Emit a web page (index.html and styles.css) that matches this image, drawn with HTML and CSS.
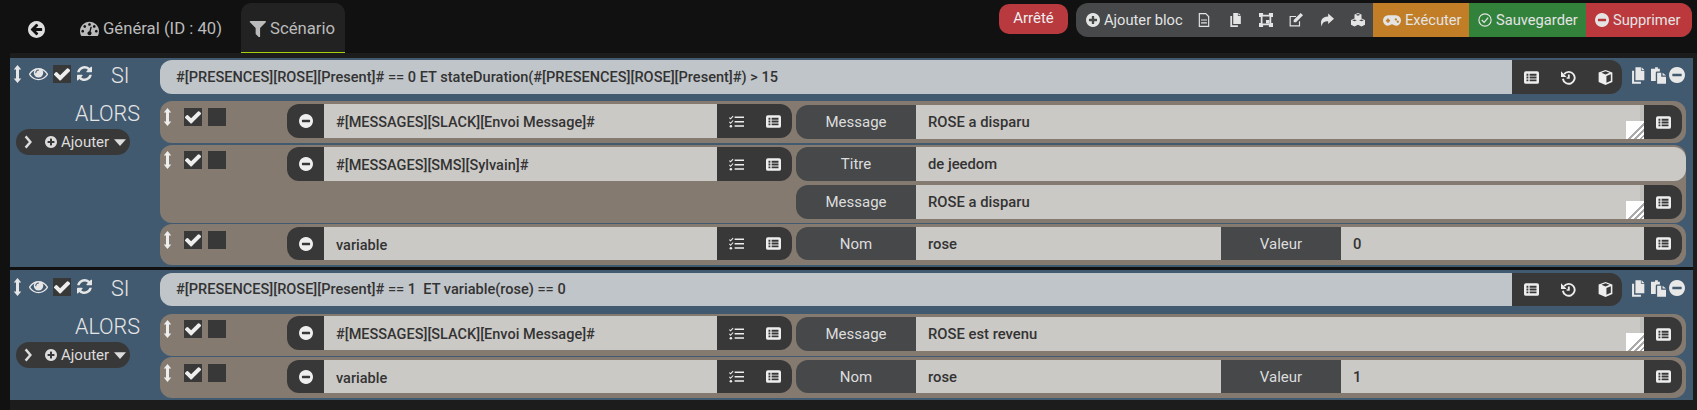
FILE: index.html
```html
<!DOCTYPE html>
<html lang="fr">
<head>
    <meta charset="UTF-8">
    <title>Scénario</title>
    <link rel="stylesheet" href="styles.css">
</head>
<body>
<svg class="defs" xmlns="http://www.w3.org/2000/svg">
    <symbol id="i-back" viewBox="128 128 1536 1536"><path d="M1408 960v-128q0-26-18.500-45t-45.500-19h-502l189-189q19-19 19-45t-19-45l-91-91q-18-18-45-18t-45 18l-362 362-91 91q-18 18-18 45t18 45l91 91 362 362q18 18 45 18t45-18l91-91q18-18 18-45t-18-45l-189-189h502q27 0 45.500-19t18.500-45zm256-64q0 209-103 385.500t-279.500 279.500-385.500 103-385.500-103-279.500-279.500-103-385.500 103-385.500 279.500-279.500 385.500-103 385.500 103 279.500 279.500 103 385.500z"/></symbol>
    <symbol id="i-gauge" viewBox="0 256 1792 1280"><path d="M384 1152q0-53-37.500-90.500t-90.500-37.500-90.500 37.500-37.500 90.500 37.500 90.500 90.500 37.500 90.500-37.500 37.500-90.500zm192-448q0-53-37.500-90.500t-90.500-37.500-90.500 37.500-37.500 90.500 37.500 90.500 90.500 37.500 90.500-37.500 37.500-90.500zm428 481l101-382q6-26-7.500-48.500t-38.500-29.500-48 6.500-30 39.500l-101 382q-60 5-107 43.500t-63 98.500q-20 77 20 146t117 89 146-20 89-117q16-60-6-117t-72-91zm660-33q0-53-37.500-90.500t-90.500-37.500-90.500 37.500-37.500 90.500 37.500 90.500 90.500 37.500 90.500-37.500 37.500-90.500zm-640-640q0-53-37.500-90.500t-90.500-37.500-90.500 37.500-37.500 90.500 37.500 90.500 90.500 37.500 90.500-37.500 37.500-90.500zm448 192q0-53-37.500-90.500t-90.500-37.500-90.500 37.500-37.500 90.500 37.500 90.500 90.500 37.500 90.500-37.500 37.500-90.500zm320 448q0 261-141 483-19 29-54 29h-1402q-35 0-54-29-141-221-141-483 0-182 71-348t191-286 286-191 348-71 348 71 286 191 191 286 71 348z"/></symbol>
    <symbol id="i-filter" viewBox="128 256 1472 1280"><path d="M1595 295q17 41-14 70l-493 493v742q0 42-39 59-13 5-25 5-27 0-45-19l-256-256q-19-19-19-45v-486l-493-493q-31-29-14-70 17-39 59-39h1280q42 0 59 39z"/></symbol>
    <symbol id="i-plus" viewBox="128 128 1536 1536"><path d="M1344 960v-128q0-26-19-45t-45-19h-256v-256q0-26-19-45t-45-19h-128q-26 0-45 19t-19 45v256h-256q-26 0-45 19t-19 45v128q0 26 19 45t45 19h256v256q0 26 19 45t45 19h128q26 0 45-19t19-45v-256h256q26 0 45-19t19-45zm320-64q0 209-103 385.500t-279.500 279.500-385.500 103-385.500-103-279.500-279.500-103-385.500 103-385.500 279.500-279.500 385.500-103 385.500 103 279.500 279.500 103 385.500z"/></symbol>
    <symbol id="i-minus" viewBox="128 128 1536 1536"><path d="M1344 960v-128q0-26-19-45t-45-19h-768q-26 0-45 19t-19 45v128q0 26 19 45t45 19h768q26 0 45-19t19-45zm320-64q0 209-103 385.500t-279.500 279.500-385.500 103-385.500-103-279.500-279.500-103-385.500 103-385.500 279.500-279.500 385.500-103 385.500 103 279.500 279.500 103 385.500z"/></symbol>
    <symbol id="i-check" viewBox="128 256 1536 1280"><path d="M1671 566q0 40-28 68l-724 724-136 136q-28 28-68 28t-68-28l-136-136-362-362q-28-28-28-68t28-68l136-136q28-28 68-28t68 28l294 295 656-657q28-28 68-28t68 28l136 136q28 28 28 68z"/></symbol>
    <symbol id="i-eye" viewBox="0 256 1792 1280"><path d="M1664 960q-152-236-381-353 61 104 61 225 0 185-131.500 316.500t-316.500 131.500-316.500-131.500-131.500-316.500q0-121 61-225-229 117-381 353 133 205 333.500 326.500t434.500 121.500 434.500-121.500 333.500-326.500zm-720-384q0-20-14-34t-34-14q-125 0-214.500 89.500t-89.500 214.500q0 20 14 34t34 14 34-14 14-34q0-86 61-147t147-61q20 0 34-14t14-34zm848 384q0 34-20 69-140 230-376.500 368.500t-499.500 138.500-499.500-139-376.500-368q-20-35-20-69t20-69q140-229 376.500-368t499.500-139 499.500 139 376.500 368q20 35 20 69z"/></symbol>
    <symbol id="i-refresh" viewBox="128 128 1536 1536"><path d="M1639 1056q0 5-1 7-64 268-268 434.500t-478 166.500q-146 0-282.500-55t-243.500-157l-129 129q-19 19-45 19t-45-19-19-45v-448q0-26 19-45t45-19h448q26 0 45 19t19 45-19 45l-137 137q71 66 161 102t187 36q134 0 250-65t186-179q11-17 53-117 8-23 30-23h192q13 0 22.500 9.500t9.500 22.500zm25-800v448q0 26-19 45t-45 19h-448q-26 0-45-19t-19-45 19-45l138-138q-148-137-349-137-134 0-250 65t-186 179q-11 17-53 117-8 23-30 23h-199q-13 0-22.500-9.500t-9.500-22.500v-7q65-268 270-434.500t480-166.500q146 0 284 55.500t245 156.500l130-129q19-19 45-19t45 19 19 45z"/></symbol>
    <symbol id="i-move" viewBox="0 0 10 24"><path d="M5 0l5 6H7v12h3l-5 6-5-6h3V6H0z"/></symbol>
    <symbol id="i-listalt" viewBox="0 0 24 20"><path fill-rule="evenodd" d="M3 0h18a3 3 0 0 1 3 3v14a3 3 0 0 1-3 3H3a3 3 0 0 1-3-3V3a3 3 0 0 1 3-3zM4 4v3h3V4zm5 0v3h11V4zM4 8.500v3h3v-3zm5 0v3h11v-3zM4 13v3h3v-3zm5 0v3h11v-3z"/></symbol>
    <symbol id="i-tasks" viewBox="0 0 24 20"><path d="M9 2h15v2.400H9zM9 9h15v2.400H9zM9 16h15v2.400H9zM1 3l1.500 1.500L6 .8l1.200 1.100-4.700 5L0 4.200zM1 10l1.500 1.500L6 7.800l1.200 1.100-4.700 5L0 11.200z"/><circle cx="3" cy="17.500" r="2"/></symbol>
    <symbol id="i-history" viewBox="0 0 24 24"><path fill="none" stroke="currentColor" stroke-width="3" d="M5 6.500A9.500 9.500 0 1 1 3 14"/><path d="M0 2l9 9H0z"/><path d="M11 7h3v7h-5v-2.600h2z"/></symbol>
    <symbol id="i-cube" viewBox="0 0 24 24"><path fill-rule="evenodd" d="M12 0l11 4v15l-11 5-11-5V4zM5.500 4.500L12 7l6.500-2.500L12 2zM13.500 9.500v11l7-3.200V6.800z"/></symbol>
    <symbol id="i-copy" viewBox="0 0 22 24"><path fill-rule="evenodd" d="M8 0h8v5h5v14H8zM17 0l4 4h-4zM6 5v16h10v3H3V5z"/></symbol>
    <symbol id="i-paste" viewBox="0 0 22 24"><path d="M3 2h3V0h4v2h3v4H9a2 2 0 0 0-2 2v12H0V2zM9 8h6v6h7v10H9zM17 8l5 4h-5z"/></symbol>
    <symbol id="i-file" viewBox="0 0 20 24"><path fill="none" stroke="currentColor" stroke-width="2" d="M2 1h11l5 5v17H2z"/><path d="M5 11h10v2H5zM5 16h10v2H5z"/></symbol>
    <symbol id="i-expand" viewBox="0 0 24 24"><path fill-rule="evenodd" d="M0 0h7v3h10V0h7v7h-3v10h3v7h-7v-3H7v3H0v-7h3V7H0zM6 6v12h12V6z"/><path d="M12 12h6v6h-6z"/></symbol>
    <symbol id="i-edit" viewBox="0 0 24 24"><path fill="none" stroke="currentColor" stroke-width="2" d="M18 14v8H2V6h10"/><path d="M20 0l4 4-12 12H8v-4z"/></symbol>
    <symbol id="i-share" viewBox="0 0 24 22"><path d="M14 0l10 9-10 9v-5C8 13 4 14 3 22 0 14 2 5 14 5z"/></symbol>
    <symbol id="i-cubes" viewBox="0 0 24 24"><path fill-rule="evenodd" d="M12 0l6 2.500v7L24 12v8l-6 3-6-3-6 3-6-3v-8l6-2.500v-7zM8 3l4 1.500L16 3l-4-1.500zM2 12.500L6 14l4-1.500L6 11zM14 12.500l4 1.500 4-1.500L18 11z"/></symbol>
    <symbol id="i-game" viewBox="0 0 28 16"><path fill-rule="evenodd" d="M8 0h12a8 8 0 0 1 0 16c-3 0-4-2-6-2s-3 2-6 2A8 8 0 0 1 8 0zM6.500 5v2h-2v2.500h2v2H9v-2h2V7H9V5zM20 4.500a1.800 1.800 0 1 0 .01 0zM23 8a1.800 1.800 0 1 0 .01 0z"/></symbol>
    <symbol id="i-okcircle" viewBox="0 0 24 24"><circle cx="12" cy="12" r="10.500" fill="none" stroke="currentColor" stroke-width="2"/><path fill="none" stroke="currentColor" stroke-width="2.200" d="M6.500 12l4 4 7-8"/></symbol>
    <symbol id="i-chevron" viewBox="0 0 10 16"><path fill="none" stroke="currentColor" stroke-width="3" d="M2 1l6 7-6 7"/></symbol>
    <symbol id="i-caret" viewBox="0 0 16 9"><path d="M0 0h16L8 9z"/></symbol>
</svg>

<header class="topbar">
    <nav class="tabs">
        <a class="tab-back"><svg class="ico ico-back"><use href="#i-back"/></svg></a>
        <a class="tab"><svg class="ico ico-gauge"><use href="#i-gauge"/></svg>Général (ID : 40)</a>
        <a class="tab tab-active"><svg class="ico ico-filter"><use href="#i-filter"/></svg>Scénario</a>
    </nav>
    <div class="state">Arrêté</div>
    <div class="toolbar">
        <a class="tool tool-add"><svg class="ico"><use href="#i-plus"/></svg>Ajouter bloc</a>
        <a class="tool-icon"><svg class="ico"><use href="#i-file"/></svg></a>
        <a class="tool-icon"><svg class="ico"><use href="#i-copy"/></svg></a>
        <a class="tool-icon"><svg class="ico"><use href="#i-expand"/></svg></a>
        <a class="tool-icon"><svg class="ico"><use href="#i-edit"/></svg></a>
        <a class="tool-icon"><svg class="ico"><use href="#i-share"/></svg></a>
        <a class="tool-icon"><svg class="ico"><use href="#i-cubes"/></svg></a>
        <a class="tool tool-run"><svg class="ico ico-game"><use href="#i-game"/></svg>Exécuter</a>
        <a class="tool tool-save"><svg class="ico"><use href="#i-okcircle"/></svg>Sauvegarder</a>
        <a class="tool tool-del"><svg class="ico"><use href="#i-minus"/></svg>Supprimer</a>
    </div>
</header>

<main class="blocks">
    <section class="block">
        <div class="block-if">
            <div class="block-tools">
                <svg class="ico ico-move"><use href="#i-move"/></svg>
                <svg class="ico ico-eye"><use href="#i-eye"/></svg>
                <span class="check"><svg class="ico"><use href="#i-check"/></svg></span>
                <svg class="ico ico-refresh"><use href="#i-refresh"/></svg>
                <span class="si">SI</span>
            </div>
            <div class="cond">#[PRESENCES][ROSE][Present]# == 0 ET stateDuration(#[PRESENCES][ROSE][Present]#) &gt; 15</div>
            <div class="btns cond-btns">
                <svg class="ico ico-btn"><use href="#i-listalt"/></svg>
                <svg class="ico ico-btn"><use href="#i-history"/></svg>
                <svg class="ico ico-btn"><use href="#i-cube"/></svg>
            </div>
            <div class="block-actions">
                <svg class="ico ico-copy"><use href="#i-copy"/></svg>
                <svg class="ico ico-copy"><use href="#i-paste"/></svg>
                <svg class="ico ico-rm"><use href="#i-minus"/></svg>
            </div>
        </div>
        <div class="block-then">
            <div class="then-left">
                <div class="alors">ALORS</div>
                <div class="add-pill">
                    <svg class="ico ico-chev"><use href="#i-chevron"/></svg>
                    <svg class="ico ico-plus"><use href="#i-plus"/></svg>Ajouter
                    <svg class="ico ico-caret"><use href="#i-caret"/></svg>
                </div>
            </div>
            <div class="rows">
                <div class="row row-area">
                    <div class="row-tools">
                        <svg class="ico ico-move"><use href="#i-move"/></svg>
                        <span class="check"><svg class="ico"><use href="#i-check"/></svg></span>
                        <span class="check"></span>
                    </div>
                    <div class="cmd">
                        <span class="cmd-rm"><svg class="ico"><use href="#i-minus"/></svg></span>
                        <div class="cmd-name">#[MESSAGES][SLACK][Envoi Message]#</div>
                        <div class="btns cmd-btns">
                            <svg class="ico ico-btn"><use href="#i-tasks"/></svg>
                            <svg class="ico ico-btn"><use href="#i-listalt"/></svg>
                        </div>
                    </div>
                    <div class="params">
                        <div class="param param-area">
                            <span class="param-label">Message</span>
                            <div class="param-value">ROSE a disparu<i class="resizer"></i></div>
                            <span class="param-btn"><svg class="ico ico-btn"><use href="#i-listalt"/></svg></span>
                        </div>
                    </div>
                </div>
                <div class="row row-multi">
                    <div class="row-tools">
                        <svg class="ico ico-move"><use href="#i-move"/></svg>
                        <span class="check"><svg class="ico"><use href="#i-check"/></svg></span>
                        <span class="check"></span>
                    </div>
                    <div class="cmd">
                        <span class="cmd-rm"><svg class="ico"><use href="#i-minus"/></svg></span>
                        <div class="cmd-name">#[MESSAGES][SMS][Sylvain]#</div>
                        <div class="btns cmd-btns">
                            <svg class="ico ico-btn"><use href="#i-tasks"/></svg>
                            <svg class="ico ico-btn"><use href="#i-listalt"/></svg>
                        </div>
                    </div>
                    <div class="params">
                        <div class="param param-title">
                            <span class="param-label">Titre</span>
                            <div class="param-value">de jeedom</div>
                        </div>
                        <div class="param param-area">
                            <span class="param-label">Message</span>
                            <div class="param-value">ROSE a disparu<i class="resizer"></i></div>
                            <span class="param-btn"><svg class="ico ico-btn"><use href="#i-listalt"/></svg></span>
                        </div>
                    </div>
                </div>
                <div class="row">
                    <div class="row-tools">
                        <svg class="ico ico-move"><use href="#i-move"/></svg>
                        <span class="check"><svg class="ico"><use href="#i-check"/></svg></span>
                        <span class="check"></span>
                    </div>
                    <div class="cmd">
                        <span class="cmd-rm"><svg class="ico"><use href="#i-minus"/></svg></span>
                        <div class="cmd-name">variable</div>
                        <div class="btns cmd-btns">
                            <svg class="ico ico-btn"><use href="#i-tasks"/></svg>
                            <svg class="ico ico-btn"><use href="#i-listalt"/></svg>
                        </div>
                    </div>
                    <div class="params">
                        <div class="param">
                            <span class="param-label">Nom</span>
                            <div class="param-value param-half">rose</div>
                            <span class="param-label param-mid">Valeur</span>
                            <div class="param-value">0</div>
                            <span class="param-btn"><svg class="ico ico-btn"><use href="#i-listalt"/></svg></span>
                        </div>
                    </div>
                </div>
            </div>
        </div>
    </section>

    <section class="block">
        <div class="block-if">
            <div class="block-tools">
                <svg class="ico ico-move"><use href="#i-move"/></svg>
                <svg class="ico ico-eye"><use href="#i-eye"/></svg>
                <span class="check"><svg class="ico"><use href="#i-check"/></svg></span>
                <svg class="ico ico-refresh"><use href="#i-refresh"/></svg>
                <span class="si">SI</span>
            </div>
            <div class="cond">#[PRESENCES][ROSE][Present]# == 1 &nbsp;ET variable(rose) == 0</div>
            <div class="btns cond-btns">
                <svg class="ico ico-btn"><use href="#i-listalt"/></svg>
                <svg class="ico ico-btn"><use href="#i-history"/></svg>
                <svg class="ico ico-btn"><use href="#i-cube"/></svg>
            </div>
            <div class="block-actions">
                <svg class="ico ico-copy"><use href="#i-copy"/></svg>
                <svg class="ico ico-copy"><use href="#i-paste"/></svg>
                <svg class="ico ico-rm"><use href="#i-minus"/></svg>
            </div>
        </div>
        <div class="block-then">
            <div class="then-left">
                <div class="alors">ALORS</div>
                <div class="add-pill">
                    <svg class="ico ico-chev"><use href="#i-chevron"/></svg>
                    <svg class="ico ico-plus"><use href="#i-plus"/></svg>Ajouter
                    <svg class="ico ico-caret"><use href="#i-caret"/></svg>
                </div>
            </div>
            <div class="rows">
                <div class="row row-area">
                    <div class="row-tools">
                        <svg class="ico ico-move"><use href="#i-move"/></svg>
                        <span class="check"><svg class="ico"><use href="#i-check"/></svg></span>
                        <span class="check"></span>
                    </div>
                    <div class="cmd">
                        <span class="cmd-rm"><svg class="ico"><use href="#i-minus"/></svg></span>
                        <div class="cmd-name">#[MESSAGES][SLACK][Envoi Message]#</div>
                        <div class="btns cmd-btns">
                            <svg class="ico ico-btn"><use href="#i-tasks"/></svg>
                            <svg class="ico ico-btn"><use href="#i-listalt"/></svg>
                        </div>
                    </div>
                    <div class="params">
                        <div class="param param-area">
                            <span class="param-label">Message</span>
                            <div class="param-value">ROSE est revenu<i class="resizer"></i></div>
                            <span class="param-btn"><svg class="ico ico-btn"><use href="#i-listalt"/></svg></span>
                        </div>
                    </div>
                </div>
                <div class="row">
                    <div class="row-tools">
                        <svg class="ico ico-move"><use href="#i-move"/></svg>
                        <span class="check"><svg class="ico"><use href="#i-check"/></svg></span>
                        <span class="check"></span>
                    </div>
                    <div class="cmd">
                        <span class="cmd-rm"><svg class="ico"><use href="#i-minus"/></svg></span>
                        <div class="cmd-name">variable</div>
                        <div class="btns cmd-btns">
                            <svg class="ico ico-btn"><use href="#i-tasks"/></svg>
                            <svg class="ico ico-btn"><use href="#i-listalt"/></svg>
                        </div>
                    </div>
                    <div class="params">
                        <div class="param">
                            <span class="param-label">Nom</span>
                            <div class="param-value param-half">rose</div>
                            <span class="param-label param-mid">Valeur</span>
                            <div class="param-value">1</div>
                            <span class="param-btn"><svg class="ico ico-btn"><use href="#i-listalt"/></svg></span>
                        </div>
                    </div>
                </div>
            </div>
        </div>
    </section>
</main>
</body>
</html>
```

FILE: styles.css
```css
html, body {
    height: 100%;
}
body {
    margin: 0;
    padding: 0;
    background-color: #111;
    color: #ddd;
    font-family: Roboto, sans-serif;
    font-size: 14px;
    overflow: hidden;
}
.defs {
    display: none;
}
.ico {
    width: 14px;
    height: 14px;
    fill: currentColor;
    flex: none;
    display: block;
}

/* top bar */
.topbar {
    height: 50px;
    padding-top: 3px;
    display: flex;
    align-items: flex-start;
    padding-left: 10px;
}
.tabs {
    display: flex;
    height: 50px;
    width: 989px;
    flex: none;
}
.tab-back {
    width: 70px;
    display: flex;
    align-items: center;
    padding: 2px 0 0 18px;
    box-sizing: border-box;
    color: #ddd;
}
.ico-back {
    width: 17px;
    height: 17px;
}
.tab {
    display: flex;
    align-items: center;
    height: 49px;
    padding-top: 2px;
    box-sizing: border-box;
    color: #bbb;
    font-size: 16.700px;
    gap: 4px;
}
.tab:nth-child(2) {
    width: 161px;
}
.tab-active {
    width: 104px;
    padding-left: 8px;
    background-color: #222;
    border-bottom: 1px solid #a4d20a;
    border-radius: 10px 10px 0 0;
    height: 50px;
}
.ico-gauge {
    width: 19px;
    height: 15px;
}
.ico-filter {
    width: 17px;
    height: 17px;
}
.state {
    width: 69px;
    height: 30px;
    margin-top: 1px;
    flex: none;
    border-radius: 10px;
    background-color: #b8393e;
    color: #eee;
    font-size: 15px;
    line-height: 28px;
    text-align: center;
}
.toolbar {
    display: flex;
    margin-left: 8px;
    height: 34px;
    width: 616px;
    flex: none;
    background-color: #46484a;
    border-radius: 12px;
    overflow: hidden;
    color: #e4e4e4;
    font-size: 14.700px;
}
.tool {
    display: flex;
    align-items: center;
    gap: 4px;
    height: 100%;
    flex: none;
    box-sizing: border-box;
}
.tool-add {
    width: 113px;
    padding-left: 10px;
}
.tool-icon {
    width: 30.660px;
    display: flex;
    align-items: center;
    justify-content: center;
    flex: none;
}
.tool-run {
    width: 96px;
    padding-left: 10px;
    background-color: #c17e27;
}
.ico-game {
    width: 18px;
    height: 11px;
}
.tool-save {
    width: 117px;
    padding-left: 9px;
    background-color: #32823c;
}
.tool-del {
    width: 106px;
    padding-left: 9px;
    background-color: #bb383d;
}

/* blocks */
.blocks {
    margin-left: 10px;
    padding: 5px 4px 0 0;
    height: 357px;
    box-sizing: border-box;
    background-color: #1c1c1c;
}
.block {
    background-color: #425a70;
    padding: 2px 0 2px;
}
.block + .block {
    border-top: 3px solid #111;
    padding-top: 3px;
}
.block-if {
    display: flex;
    height: 34px;
}
.block-tools {
    width: 150px;
    flex: none;
    display: flex;
    align-items: flex-start;
    color: #e6e6e6;
    padding-top: 5px;
    box-sizing: border-box;
}
.block-tools .ico-move {
    margin: 0 0 0 3px;
    width: 9px;
    height: 18px;
}
.ico-eye {
    width: 19px;
    height: 15px;
    margin: 1px 0 0 7px;
}
.block-tools .check {
    margin: 0 0 0 5px;
}
.ico-refresh {
    width: 15px;
    height: 15px;
    margin: 1px 0 0 6px;
}
.si {
    font-size: 21.500px;
    margin-left: 19px;
    line-height: 22px;
    font-weight: 300;
}
.check {
    width: 18px;
    height: 18px;
    background-color: #383838;
    color: #eee;
    flex: none;
    display: flex;
    align-items: center;
    justify-content: center;
}
.check .ico {
    width: 16px;
    height: 14px;
}
.cond {
    width: 1352px;
    flex: none;
    box-sizing: border-box;
    background-color: #c0c5c9;
    border-radius: 12px 0 0 12px;
    padding-left: 16px;
    color: #333;
    font-size: 14.550px;
    font-weight: 500;
    line-height: 36px;
}
.btns {
    display: flex;
    align-items: center;
    gap: 22px;
    padding-left: 12px;
    box-sizing: border-box;
    background-color: #383838;
    border-radius: 0 12px 12px 0;
    color: #eee;
    flex: none;
}
.cond-btns {
    width: 110px;
}
.ico-btn {
    width: 15px;
    height: 15px;
}
.block-actions {
    display: flex;
    align-items: flex-start;
    padding: 7px 0 0 8px;
    color: #e8e8e8;
}
.ico-copy {
    width: 15px;
    height: 17px;
    margin-right: 6px;
}
.ico-rm {
    width: 16px;
    height: 16px;
    margin-left: -3px;
}
.block + .block .block-if {
    height: 33px;
}
.block + .block .cond {
    line-height: 34px;
}
.block-then {
    display: flex;
    margin-top: 7px;
}
.block + .block .block-then {
    margin-top: 8px;
}
.then-left {
    width: 150px;
    flex: none;
}
.alors {
    width: 130px;
    text-align: right;
    font-size: 21.500px;
    font-weight: 300;
    line-height: 26px;
    color: #e6e6e6;
}
.add-pill {
    display: flex;
    align-items: center;
    margin: 2px 0 0 6px;
    width: 114px;
    height: 26px;
    border-radius: 13px;
    background-color: #383838;
    color: #ddd;
    font-size: 15px;
    box-sizing: border-box;
    padding-left: 8px;
}
.ico-chev {
    width: 8px;
    height: 14px;
    margin-right: 13px;
}
.ico-plus {
    width: 12px;
    height: 12px;
    margin-right: 4px;
}
.ico-caret {
    width: 12px;
    height: 7px;
    margin-left: 5px;
}
.rows {
    width: 1526px;
    flex: none;
    display: flex;
    flex-direction: column;
    gap: 1px;
}
.row {
    display: flex;
    align-items: flex-start;
    height: 41px;
    background-color: #857a70;
    border-radius: 12px;
    padding-top: 3px;
    box-sizing: border-box;
}
.row-area {
    height: 42px;
}
.block + .block .row-area {
    padding-top: 2px;
}
.row-multi {
    height: 78px;
    margin-top: 1px;
    padding-top: 2px;
}
.row-tools {
    width: 127px;
    flex: none;
    display: flex;
    align-items: flex-start;
    color: #eee;
    padding-top: 4px;
    box-sizing: border-box;
}
.row-tools .ico-move {
    width: 9px;
    height: 18px;
    margin: 0 12px 0 3px;
    flex: none;
}
.row-tools .check {
    margin-right: 6px;
}
.cmd {
    display: flex;
    width: 505px;
    flex: none;
    height: 33px;
}
.row-area .cmd,
.row-multi .cmd {
    height: 34px;
}
.cmd-rm {
    width: 37px;
    background-color: #383838;
    border-radius: 12px 0 0 12px;
    display: flex;
    align-items: center;
    justify-content: center;
    color: #eee;
}
.cmd-name {
    width: 393px;
    background-color: #cbc9c6;
    color: #333;
    font-size: 14.500px;
    font-weight: 500;
    line-height: 36px;
    padding: 1px 0 0 12px;
    box-sizing: border-box;
}
.cmd-btns {
    width: 75px;
}
.params {
    display: flex;
    flex-direction: column;
    gap: 4px;
    width: 890px;
    flex: none;
    margin-left: 4px;
}
.row-area .params {
    margin-top: 1px;
}
.param {
    display: flex;
    height: 33px;
    margin-right: 4px;
}
.param-area,
.param-title {
    height: 34px;
}
.param-title {
    margin-right: 0;
}
.param-label {
    width: 120px;
    flex: none;
    background-color: #46484a;
    border-radius: 12px 0 0 12px;
    color: #ddd;
    text-align: center;
    line-height: 34px;
    font-size: 15px;
}
.param-mid {
    border-radius: 0;
}
.param-value {
    position: relative;
    flex: 1;
    min-width: 0;
    background-color: #cbc9c6;
    color: #333;
    font-size: 14.800px;
    font-weight: 500;
    line-height: 34px;
    padding-left: 12px;
    box-sizing: border-box;
}
.param-half {
    flex: none;
    width: 305px;
}
.param-title .param-value {
    border-radius: 0 12px 12px 0;
}
.param-btn {
    width: 38px;
    flex: none;
    background-color: #383838;
    border-radius: 0 12px 12px 0;
    display: flex;
    align-items: center;
    justify-content: center;
    color: #eee;
}
.param-area .param-value {
    border-right: 4px solid #c0bebb;
}
/* textarea resize handle */
.resizer {
    position: absolute;
    right: -4px;
    bottom: 0;
    width: 18px;
    height: 18px;
    background:
        linear-gradient(135deg, #fff 50%, transparent 50%),
        repeating-linear-gradient(135deg, #fff 0, #fff 2px, #aaa 2px, #aaa 4px);
}
```
